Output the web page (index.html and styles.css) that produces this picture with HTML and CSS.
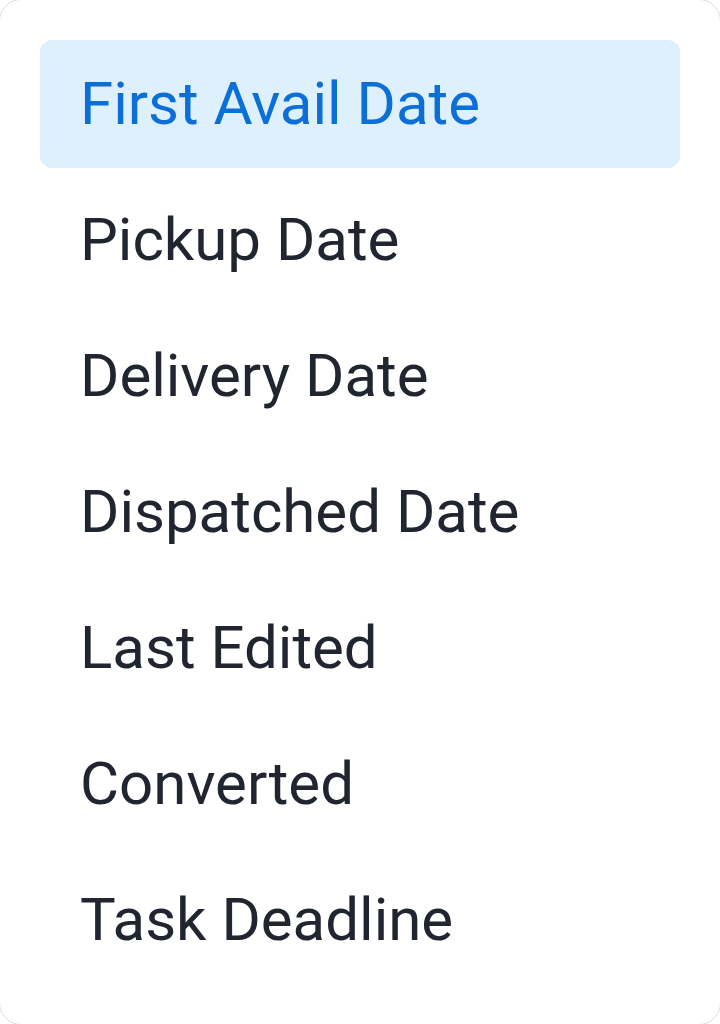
FILE: index.html
```html
<!DOCTYPE html>
<html lang="en">
<head>
<meta charset="utf-8">
<title>Date menu</title>
<link rel="stylesheet" href="styles.css">
</head>
<body>
<div class="menu">
  <ul class="menu-list">
    <li class="menu-item is-active">First Avail Date</li>
    <li class="menu-item">Pickup Date</li>
    <li class="menu-item">Delivery Date</li>
    <li class="menu-item">Dispatched Date</li>
    <li class="menu-item">Last Edited</li>
    <li class="menu-item">Converted</li>
    <li class="menu-item">Task Deadline</li>
  </ul>
</div>
</body>
</html>
```

FILE: styles.css
```css
html, body {
  margin: 0;
  padding: 0;
  background: #ffffff;
}

body {
  font-family: Roboto, "Liberation Sans", Arial, sans-serif;
  overflow: hidden;
}

.menu {
  box-sizing: border-box;
  width: 722px;
  height: 1026px;
  margin: -1px;
  border: 1px solid #dcdee2;
  border-radius: 22px;
  background: #ffffff;
  padding: 40px 40px;
}

.menu-list {
  list-style: none;
  margin: 0;
  padding: 0;
  display: flex;
  flex-direction: column;
  gap: 8px;
}

.menu-item {
  box-sizing: border-box;
  height: 128px;
  display: flex;
  align-items: center;
  padding: 0 40px;
  border-radius: 12px;
  font-size: 60px;
  line-height: 1;
  color: #21252f;
}

.menu-item.is-active {
  background: #def0fb;
  color: #0c6fd8;
}
```
